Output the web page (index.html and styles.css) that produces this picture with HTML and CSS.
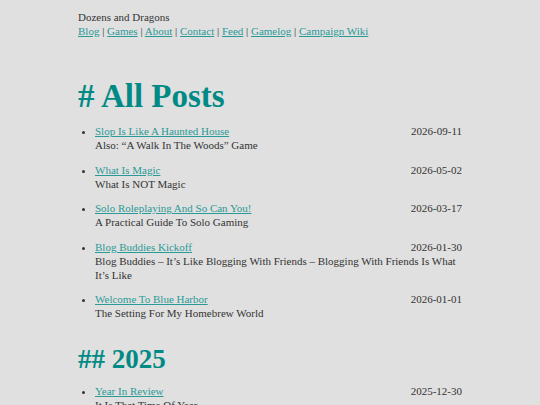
FILE: index.html
```html
<!DOCTYPE html>
<html>
<head>
<meta charset="utf-8">
<link rel="stylesheet" href="styles.css">
</head>
<body>
<div class="page">
  <header class="site-header">
    <div class="site-title">Dozens and Dragons</div>
    <nav class="nav">
      <a href="#">Blog</a> | <a href="#">Games</a> | <a href="#">About</a> | <a href="#">Contact</a> | <a href="#">Feed</a> | <a href="#">Gamelog</a> | <a href="#">Campaign Wiki</a>
    </nav>
  </header>
  <h1 class="h1"># All Posts</h1>
  <ul class="posts">
    <li class="post">
      <div class="post-row"><a href="#">Slop Is Like A Haunted House</a><span class="date">2026-09-11</span></div>
      <div class="sub">Also: “A Walk In The Woods” Game</div>
    </li>
    <li class="post">
      <div class="post-row"><a href="#">What Is Magic</a><span class="date">2026-05-02</span></div>
      <div class="sub">What Is NOT Magic</div>
    </li>
    <li class="post">
      <div class="post-row"><a href="#">Solo Roleplaying And So Can You!</a><span class="date">2026-03-17</span></div>
      <div class="sub">A Practical Guide To Solo Gaming</div>
    </li>
    <li class="post">
      <div class="post-row"><a href="#">Blog Buddies Kickoff</a><span class="date">2026-01-30</span></div>
      <div class="sub">Blog Buddies – It’s Like Blogging With Friends – Blogging With Friends Is What It’s Like</div>
    </li>
    <li class="post">
      <div class="post-row"><a href="#">Welcome To Blue Harbor</a><span class="date">2026-01-01</span></div>
      <div class="sub">The Setting For My Homebrew World</div>
    </li>
  </ul>
  <h2 class="h2">## 2025</h2>
  <ul class="posts">
    <li class="post">
      <div class="post-row"><a href="#">Year In Review</a><span class="date">2025-12-30</span></div>
      <div class="sub">It Is That Time Of Year</div>
    </li>
  </ul>
</div>
</body>
</html>
```
FILE: styles.css
```css
html, body {
  margin: 0;
  padding: 0;
  background: #e0e0e0;
}
body {
  font-family: "Liberation Serif", "DejaVu Serif", serif;
  font-size: 11px;
  line-height: 14px;
  color: #333;
}
.page {
  width: 384px;
  margin: 0 auto;
  padding-top: 10px;
}
.site-title {
  color: #333;
}
.nav {
  color: #333;
}
a {
  color: #2a9a96;
  text-decoration: underline;
}
.h1 {
  font-size: 33px;
  line-height: 36px;
  color: #008a85;
  font-weight: bold;
  margin: 40px 0 10px 0;
}
.h2 {
  font-size: 27px;
  line-height: 30px;
  color: #008a85;
  font-weight: bold;
  margin: 24px 0 10px 0;
}
.posts {
  margin: 0;
  padding-left: 17px;
}
.post {
  margin-bottom: 10.5px;
}
.post-row {
  display: flex;
  justify-content: space-between;
}
.date {
  color: #333;
}
```
